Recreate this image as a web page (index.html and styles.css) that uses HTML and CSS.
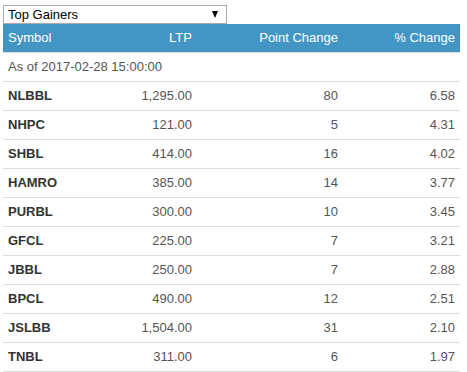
FILE: index.html
```html
<!DOCTYPE html>
<html>
<head>
<meta charset="utf-8">
<link rel="stylesheet" href="styles.css">
</head>
<body>
<div class="wrap">
  <div class="select">
    <span class="select-text">Top Gainers</span>
    <span class="select-arrow"></span>
  </div>
  <table class="market">
    <thead>
      <tr>
        <th class="c-sym">Symbol</th>
        <th class="c-ltp num">LTP</th>
        <th class="c-pt num">Point Change</th>
        <th class="c-pct num">% Change</th>
      </tr>
    </thead>
    <tbody>
      <tr><td colspan="4" class="asof">As of 2017-02-28 15:00:00</td></tr>
      <tr><td class="sym">NLBBL</td><td class="num">1,295.00</td><td class="num">80</td><td class="num">6.58</td></tr>
      <tr><td class="sym">NHPC</td><td class="num">121.00</td><td class="num">5</td><td class="num">4.31</td></tr>
      <tr><td class="sym">SHBL</td><td class="num">414.00</td><td class="num">16</td><td class="num">4.02</td></tr>
      <tr><td class="sym">HAMRO</td><td class="num">385.00</td><td class="num">14</td><td class="num">3.77</td></tr>
      <tr><td class="sym">PURBL</td><td class="num">300.00</td><td class="num">10</td><td class="num">3.45</td></tr>
      <tr><td class="sym">GFCL</td><td class="num">225.00</td><td class="num">7</td><td class="num">3.21</td></tr>
      <tr><td class="sym">JBBL</td><td class="num">250.00</td><td class="num">7</td><td class="num">2.88</td></tr>
      <tr><td class="sym">BPCL</td><td class="num">490.00</td><td class="num">12</td><td class="num">2.51</td></tr>
      <tr><td class="sym">JSLBB</td><td class="num">1,504.00</td><td class="num">31</td><td class="num">2.10</td></tr>
      <tr><td class="sym">TNBL</td><td class="num">311.00</td><td class="num">6</td><td class="num">1.97</td></tr>
    </tbody>
  </table>
</div>
</body>
</html>
```
FILE: styles.css
```css
html, body {
  margin: 0;
  padding: 0;
  background: #fff;
}
body {
  font-family: "Liberation Sans", Arial, sans-serif;
  font-size: 13px;
  color: #555;
}
.wrap {
  padding: 5px 7px 0 3px;
}
.select {
  box-sizing: border-box;
  width: 224px;
  height: 19px;
  border: 1px solid #a9a9a9;
  display: flex;
  align-items: center;
  justify-content: space-between;
  padding: 0 6px 0 4px;
  color: #000;
  font-size: 13px;
  line-height: 17px;
}
.select-arrow {
  width: 0;
  height: 0;
  border-left: 3.5px solid transparent;
  border-right: 3.5px solid transparent;
  border-top: 7px solid #000;
  margin-right: 2px;
}
.market {
  border-collapse: collapse;
  width: 457px;
  table-layout: fixed;
}
.market th {
  background: #4396c4;
  color: #fff;
  font-weight: normal;
  text-align: left;
  padding: 5px;
  line-height: 18px;
  border-bottom: 1px solid #ddd;
}
.market td {
  padding: 5px;
  line-height: 18px;
  border-bottom: 1px solid #ddd;
}
.market .num {
  text-align: right;
}
.c-sym { width: 80px; }
.c-ltp { width: 94px; }
.c-pt { width: 136px; }
.c-pct { width: 107px; }
.market .sym {
  font-weight: bold;
  color: #333;
}
.market .asof {
  color: #555;
}
```
